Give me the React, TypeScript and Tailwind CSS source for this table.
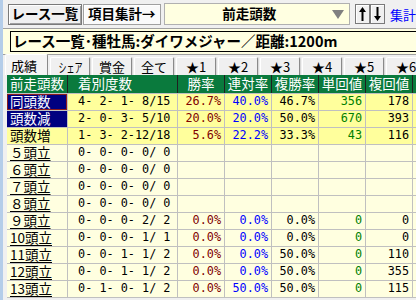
import React from "react";

type Row = {
  label: string;
  kind: "focus" | "navy" | "plain";
  hi: boolean;
  under: boolean;
  rec: string;
  v: string[] | null;
};

const rows: Row[] = [
  { label: "同頭数", kind: "focus", hi: true, under: false, rec: " 4- 2- 1- 8/15", v: ["26.7%", "40.0%", "46.7%", "356", "178"] },
  { label: "頭数減", kind: "navy", hi: true, under: false, rec: " 2- 0- 3- 5/10", v: ["20.0%", "20.0%", "50.0%", "670", "393"] },
  { label: "頭数増", kind: "plain", hi: true, under: false, rec: " 1- 3- 2-12/18", v: ["5.6%", "22.2%", "33.3%", "43", "116"] },
  { label: "５頭立", kind: "plain", hi: false, under: true, rec: " 0- 0- 0- 0/ 0", v: null },
  { label: "６頭立", kind: "plain", hi: false, under: true, rec: " 0- 0- 0- 0/ 0", v: null },
  { label: "７頭立", kind: "plain", hi: false, under: true, rec: " 0- 0- 0- 0/ 0", v: null },
  { label: "８頭立", kind: "plain", hi: false, under: true, rec: " 0- 0- 0- 0/ 0", v: null },
  { label: "９頭立", kind: "plain", hi: false, under: true, rec: " 0- 0- 0- 2/ 2", v: ["0.0%", "0.0%", "0.0%", "0", "0"] },
  { label: "10頭立", kind: "plain", hi: false, under: true, rec: " 0- 0- 0- 1/ 1", v: ["0.0%", "0.0%", "0.0%", "0", "0"] },
  { label: "11頭立", kind: "plain", hi: false, under: true, rec: " 0- 0- 1- 1/ 2", v: ["0.0%", "0.0%", "50.0%", "0", "110"] },
  { label: "12頭立", kind: "plain", hi: false, under: true, rec: " 0- 0- 1- 1/ 2", v: ["0.0%", "0.0%", "50.0%", "0", "355"] },
  { label: "13頭立", kind: "plain", hi: false, under: true, rec: " 0- 1- 0- 1/ 2", v: ["0.0%", "50.0%", "50.0%", "0", "115"] },
];

const valColors = [
  "text-[#800000]",
  "text-[#0000ff]",
  "text-black",
  "text-[#008000]",
  "text-black",
];

const tabs = ["賞金", "全て", "★1", "★2", "★3", "★4", "★5", "★6"];

function ArrowUp() {
  return (
    <svg width="7" height="14" viewBox="0 0 7 14">
      <path d="M3.5 0 L7 5 H4.5 V14 H2.5 V5 H0 Z" fill="#000" />
    </svg>
  );
}

function ArrowDown() {
  return (
    <svg width="7" height="14" viewBox="0 0 7 14">
      <path d="M3.5 14 L7 9 H4.5 V0 H2.5 V9 H0 Z" fill="#000" />
    </svg>
  );
}

const tabCls =
  "h-[18px] w-[40px] shrink-0 flex items-center justify-center bg-[#f0f0f0] border-t border-l border-white border-r border-r-[#8a8a8a] rounded-t-[2px] shadow-[1px_0_0_#d8d8d8]";

export default function App() {
  return (
    <div className="w-[416px] h-[300px] overflow-hidden bg-[#f0f0f0] flex font-['Noto_Sans_CJK_JP',sans-serif] text-black leading-none">
      <div className="w-[3px] shrink-0 bg-[#b4cde9]" />
      <div className="flex-1 min-w-0 flex flex-col">
        {/* toolbar */}
        <div className="h-[28px] shrink-0 flex items-center pl-[5px]">
          <div className="h-[21px] w-[74px] flex items-center justify-center bg-[#f0f0f0] border border-[#7a7a7a] shadow-[inset_1px_1px_0_#ffffff,inset_-1px_-1px_0_#a0a0a0] text-[13.5px] font-bold">
            レース一覧
          </div>
          <div className="ml-[1px] h-[21px] w-[78px] flex items-center justify-center bg-[#fafafa] border border-[#a0a0a0] shadow-[inset_1px_1px_0_#ffffff] text-[13.5px] font-bold">
            項目集計→
          </div>
          <div className="ml-[3px] h-[22px] w-[187px] flex items-center bg-[#ffffe1] border border-[#b0b0b0]">
            <div className="flex-1 text-center pl-[2px] text-[13.5px] font-bold">前走頭数</div>
            <svg width="12" height="9" viewBox="0 0 12 9" className="mr-[5px]">
              <path d="M0 0 H12 L6 9 Z" fill="#808080" />
            </svg>
          </div>
          <div className="ml-[5px] h-[20px] w-[15px] flex items-center justify-center bg-[#f0f0f0] border border-[#7a7a7a] shadow-[inset_1px_1px_0_#ffffff]">
            <ArrowUp />
          </div>
          <div className="h-[20px] w-[15px] flex items-center justify-center bg-[#f0f0f0] border border-[#7a7a7a] shadow-[inset_1px_1px_0_#ffffff]">
            <ArrowDown />
          </div>
          <div className="ml-[5px] text-[13px] text-[#0000ff] whitespace-nowrap">集計</div>
        </div>

        {/* title band */}
        <div className="h-[27px] shrink-0 bg-[#ffffe1] border-t border-b border-[#a0a0a0] flex items-center pl-[7px]">
          <div className="h-[21px] flex-1 bg-[#ffffe1] border border-r-0 border-black flex items-center pl-[2px] text-[14.5px] font-bold whitespace-nowrap">
            レース一覧･種牡馬:ダイワメジャー／距離:1200m
          </div>
        </div>

        {/* tabs */}
        <div className="h-[20px] shrink-0 flex items-end pl-[2px] gap-[2px] text-[13px] whitespace-nowrap">
          <div className="h-[21px] w-[43px] shrink-0 flex items-center pl-[5px] bg-[#f4f4f4] border-t border-l border-white border-r border-r-[#8a8a8a] rounded-t-[2px]">
            成績
          </div>
          <div className={tabCls}>
            <span className="inline-block scale-x-[0.62]">シェア</span>
          </div>
          {tabs.map((t) => (
            <div key={t} className={tabCls}>
              {t}
            </div>
          ))}
        </div>

        {/* table */}
        <div className="pl-[4px]">
          <div className="grid grid-cols-[61px_110px_47px_47px_47px_47px_47px_1fr] h-[19px] bg-[#0a7a3d] text-white text-[13.5px] border-b border-[#c0c0c0]">
            <div className="flex items-center pl-[3px] border-r border-[#202020]">前走頭数</div>
            <div className="flex items-center pl-[10px] border-r border-[#202020]">着別度数</div>
            <div className="flex items-center justify-center border-r border-[#202020]">勝率</div>
            <div className="flex items-center justify-center border-r border-[#202020]">連対率</div>
            <div className="flex items-center justify-center border-r border-[#202020]">複勝率</div>
            <div className="flex items-center justify-center border-r border-[#202020]">単回値</div>
            <div className="flex items-center justify-center border-r border-[#202020]">複回値</div>
            <div />
          </div>
          {rows.map((r) => (
            <div
              key={r.label}
              className={
                r.hi
                  ? "grid grid-cols-[61px_110px_47px_47px_47px_47px_47px_1fr] h-[17px] bg-[#ffff9c] border-b border-[#c0c0c0]"
                  : "grid grid-cols-[61px_110px_47px_47px_47px_47px_47px_1fr] h-[17px] bg-[#ffffe0] border-b border-[#c0c0c0]"
              }
            >
              <div
                className={
                  r.kind === "focus"
                    ? "flex items-center pl-[3px] border-r border-[#c0c0c0] bg-[#000080] text-white text-[13.5px] shadow-[inset_0_0_0_1px_#8b1c1c]"
                    : r.kind === "navy"
                    ? "flex items-center pl-[3px] border-r border-[#c0c0c0] bg-[#000080] text-white text-[13.5px]"
                    : "flex items-center pl-[3px] border-r border-[#c0c0c0] text-[13.5px]"
                }
              >
                <span
                  className={
                    r.under
                      ? "inline-block leading-none underline underline-offset-[2px]"
                      : "inline-block leading-none"
                  }
                >
                  {r.label}
                </span>
              </div>
              <div className="flex items-center pl-[3px] border-r border-[#c0c0c0] whitespace-pre font-['DejaVu_Sans_Mono',monospace] text-[11.8px]">
                {r.rec}
              </div>
              {[0, 1, 2, 3, 4].map((i) => (
                <div
                  key={i}
                  className={
                    "flex items-center justify-end pr-[3px] border-r border-[#c0c0c0] font-['DejaVu_Sans_Mono',monospace] text-[11.8px] " +
                    valColors[i]
                  }
                >
                  {r.v ? r.v[i] : ""}
                </div>
              ))}
              <div />
            </div>
          ))}
        </div>
      </div>
    </div>
  );
}
